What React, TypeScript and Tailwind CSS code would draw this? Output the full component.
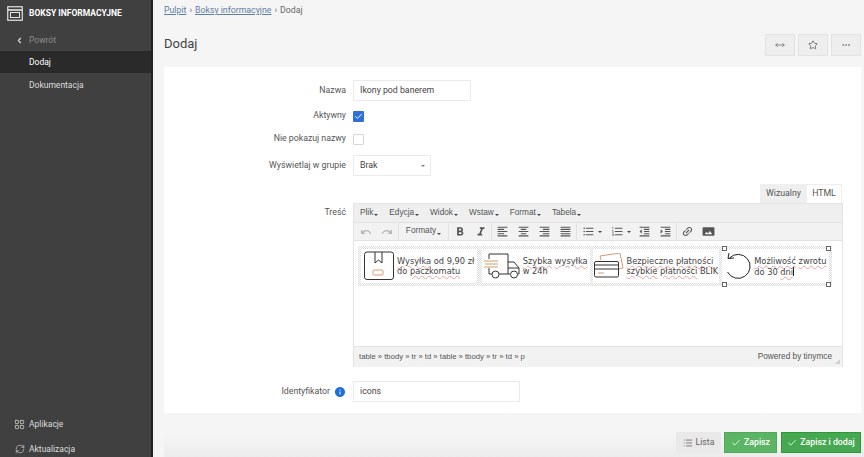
import { Check, ChevronLeft, Ellipsis, LayoutGrid, List, MoveHorizontal, RefreshCw, Star } from "lucide-react"
import {
  MdFormatAlignCenter,
  MdFormatAlignJustify,
  MdFormatAlignLeft,
  MdFormatAlignRight,
  MdFormatBold,
  MdFormatIndentDecrease,
  MdFormatIndentIncrease,
  MdFormatItalic,
  MdFormatListBulleted,
  MdFormatListNumbered,
  MdInfo,
  MdLink,
  MdPanorama,
  MdRedo,
  MdUndo,
} from "react-icons/md"
import type { ReactNode } from "react"

const menuItems = ["Plik", "Edycja", "Widok", "Wstaw", "Format", "Tabela"]

function Caret({ className = "" }: { className?: string }) {
  return <span className={`inline-block border-x-[2px] border-t-[2px] border-x-transparent border-t-[#444] ${className}`}></span>
}

function ToolBtn({ children, faded = false }: { children: ReactNode; faded?: boolean }) {
  return <span className={`flex h-[17px] w-[21px] items-center justify-center ${faded ? "text-[#b5b5b5]" : "text-[#555]"}`}>{children}</span>
}

function Divider() {
  return <span className="h-[17px] w-px bg-[#e2e2e2]"></span>
}

function Handle({ className }: { className: string }) {
  return <span className={`absolute h-[5px] w-[5px] border border-[#666] bg-white ${className}`}></span>
}

function Wavy({ children }: { children: ReactNode }) {
  return <span className="underline decoration-[#eba0a0] decoration-wavy decoration-[1px] underline-offset-1">{children}</span>
}

function PackageIcon() {
  return (
    <svg width="31" height="30" viewBox="0 0 31 30" fill="none" className="shrink-0">
      <rect x="0.5" y="1" width="29" height="27.5" rx="2.5" stroke="#333" />
      <path d="M11 1v11l3.5-3 3.5 3V1" stroke="#333" />
      <rect x="9" y="19" width="10" height="5" rx="1" stroke="#d79a70" />
    </svg>
  )
}

function TruckIcon() {
  return (
    <svg width="37" height="26" viewBox="0 0 37 26" fill="none" className="shrink-0">
      <path d="M5 1h19v20h-9M5 1v5M5 15v6h3" stroke="#333" />
      <path d="M24 9h6l5 6v6h-1M24 15h11M24 21h2" stroke="#333" />
      <circle cx="11.5" cy="21.5" r="3.5" stroke="#333" />
      <circle cx="30" cy="21.5" r="3.5" stroke="#333" />
      <path d="M0 8h14M1 11h13M0 14h14" stroke="#d79a70" />
    </svg>
  )
}

function CardIcon() {
  return (
    <svg width="31" height="26" viewBox="0 0 31 26" fill="none" className="shrink-0">
      <path d="M7 7 6 3l20-3 3 15-4 1" stroke="#d79a70" />
      <rect x="0.5" y="8.5" width="24" height="15.5" rx="1.5" stroke="#333" />
      <path d="M1 12h24M1 16h24" stroke="#333" />
      <path d="M4 20h6" stroke="#d79a70" />
    </svg>
  )
}

function ReturnIcon() {
  return (
    <svg width="25" height="27" viewBox="0 0 25 27" fill="none" className="shrink-0">
      <path d="M3.5 5A12 12 0 1 1 1.5 19" stroke="#222" />
      <path d="M2 5.5 8 5M2 5.5 3 0" stroke="#222" />
    </svg>
  )
}

function Row({ label, children, className = "" }: { label: ReactNode; children: ReactNode; className?: string }) {
  return (
    <div className={`flex items-center ${className}`}>
      <div className="flex w-[189px] shrink-0 items-center justify-end pr-[7px] text-[#555]">{label}</div>
      {children}
    </div>
  )
}

export default function App() {
  return (
    <div className="flex h-[457px] w-[864px] overflow-hidden bg-[#f5f5f5] font-['Roboto',sans-serif] text-[8.75px] text-[#444]">
      {/* Sidebar */}
      <aside className="flex w-[153px] shrink-0 flex-col border-r-2 border-[#222] bg-[#404040] text-[#ddd]">
        <div className="flex h-[29px] items-center gap-[6px] pb-[2px] pl-[7px]">
          <svg width="16" height="15" viewBox="0 0 16 15" fill="none">
            <rect x="0.75" y="0.75" width="14.5" height="13.5" stroke="#e5e5e5" strokeWidth="1.2" />
            <path d="M1 4h14" stroke="#e5e5e5" strokeWidth="1.6" />
            <rect x="3.5" y="6.5" width="9" height="5" stroke="#e5e5e5" />
          </svg>
          <span className="text-[8.5px] font-bold text-white">BOKSY INFORMACYJNE</span>
        </div>
        <div className="flex h-[22px] items-center text-[8.5px] text-[#8c8c8c]">
          <ChevronLeft size={9} strokeWidth={3} className="ml-[15px] mr-[5px] text-[#ddd]" />
          Powrót
        </div>
        <div className="flex h-[22px] items-center bg-[#2a2a2a] pl-[29px] text-[8.5px] text-white">Dodaj</div>
        <div className="flex h-[24px] items-center pl-[29px] text-[8.5px]">Dokumentacja</div>
        <div className="mt-auto flex h-[25px] items-center gap-[4px] pl-[14px] text-[8.5px]">
          <LayoutGrid size={11} strokeWidth={1.5} />
          Aplikacje
        </div>
        <div className="flex h-[20px] items-center gap-[4px] pl-[15px] pt-[4px] text-[8.5px]">
          <RefreshCw size={10} strokeWidth={1.5} />
          Aktualizacja
        </div>
      </aside>

      {/* Main */}
      <main className="flex min-w-0 flex-1 flex-col pl-[11px]">
        <div className="flex h-[20px] items-center gap-[3px] pt-[1px] text-[#666]">
          <a className="text-[#5f7ea6] underline">Pulpit</a>›<a className="text-[#5f7ea6] underline">Boksy informacyjne</a>›<span>Dodaj</span>
        </div>
        <div className="mt-[14px] flex h-[22px] items-center justify-between pr-[3px]">
          <h1 className="pb-[2px] text-[13px] text-[#444]">Dodaj</h1>
          <div className="flex gap-[3px]">
            <button className="flex h-[22px] w-[30px] items-center justify-center border border-[#e3e3e3] bg-[#eeeeee] text-[#777]">
              <MoveHorizontal size={10} />
            </button>
            <button className="flex h-[22px] w-[30px] items-center justify-center border border-[#e3e3e3] bg-[#eeeeee] text-[#666]">
              <Star size={10} />
            </button>
            <button className="flex h-[22px] w-[30px] items-center justify-center border border-[#e3e3e3] bg-[#eeeeee] text-[#777]">
              <Ellipsis size={10} />
            </button>
          </div>
        </div>

        {/* Form card */}
        <section className="mr-[3px] mt-[11px] h-[346px] bg-white pt-[13px]">
          <Row label="Nazwa">
            <div className="flex h-[21px] w-[118px] items-center border border-[#eaeaea] px-[6px] text-[#444]">Ikony pod banerem</div>
          </Row>
          <Row label="Aktywny" className="mt-[8px] h-[14px]">
            <span className="flex h-[11px] w-[11px] items-center justify-center rounded-[1px] bg-[#2f6fdc]">
              <Check size={9} strokeWidth={2.5} className="text-white" />
            </span>
          </Row>
          <Row label="Nie pokazuj nazwy" className="mt-[9px] h-[14px]">
            <span className="h-[11px] w-[11px] rounded-[1px] border border-[#d5d5d5] bg-white"></span>
          </Row>
          <Row label="Wyświetlaj w grupie" className="mt-[9px]">
            <div className="flex h-[21px] w-[78px] items-center justify-between border border-[#eaeaea] pl-[6px] pr-[5px] text-[#444]">
              Brak
              <Caret className="border-t-[#777]" />
            </div>
          </Row>

          <div className="mt-[8px] flex">
            <div className="w-[189px] shrink-0 pr-[7px] pt-[22px] text-right text-[#555]">Treść</div>
            <div className="w-[490px]">
              <div className="flex h-[19px] justify-end pr-[1px] text-[#555]">
                <span className="flex w-[47px] items-center justify-center bg-[#efefef]">Wizualny</span>
                <span className="flex w-[35px] items-center justify-center border-r border-t border-[#eee]">HTML</span>
              </div>
              <div className="relative h-[164px] border border-[#e4e4e4] font-['Liberation_Sans',sans-serif] text-[8.25px]">
                <div className="flex h-[18px] items-center gap-[11px] bg-[#efefef] pl-[6px]">
                  {menuItems.map((item) => (
                    <span key={item} className="flex items-center gap-[1px] text-[#555]">
                      {item}
                      <Caret className="mt-[4px]" />
                    </span>
                  ))}
                </div>
                <div className="flex h-[19px] items-center border-y border-[#e2e2e2] bg-[#f2f2f2] pl-[1px]">
                  <ToolBtn faded><MdUndo size={12} /></ToolBtn>
                  <ToolBtn faded><MdRedo size={12} /></ToolBtn>
                  <span className="ml-[1px]"></span>
                  <Divider />
                  <span className="flex w-[49px] items-center justify-center gap-[1px] text-[#555]">
                    Formaty
                    <Caret className="mt-[4px]" />
                  </span>
                  <Divider />
                  <ToolBtn><MdFormatBold size={14} /></ToolBtn>
                  <ToolBtn><MdFormatItalic size={14} /></ToolBtn>
                  <Divider />
                  <ToolBtn><MdFormatAlignLeft size={13} /></ToolBtn>
                  <ToolBtn><MdFormatAlignCenter size={13} /></ToolBtn>
                  <ToolBtn><MdFormatAlignRight size={13} /></ToolBtn>
                  <ToolBtn><MdFormatAlignJustify size={13} /></ToolBtn>
                  <Divider />
                  <span className="flex w-[30px] items-center justify-center gap-[3px] text-[#555]">
                    <MdFormatListBulleted size={13} />
                    <Caret />
                  </span>
                  <span className="flex w-[27px] items-center justify-center gap-[3px] text-[#555]">
                    <MdFormatListNumbered size={13} />
                    <Caret />
                  </span>
                  <ToolBtn><MdFormatIndentDecrease size={13} /></ToolBtn>
                  <ToolBtn><MdFormatIndentIncrease size={13} /></ToolBtn>
                  <Divider />
                  <ToolBtn><MdLink size={13} className="-rotate-45" /></ToolBtn>
                  <ToolBtn><MdPanorama size={13} /></ToolBtn>
                </div>

                {/* Editor content */}
                <div className="h-[105px] bg-white pl-[4px] pt-[5px] font-['DejaVu_Sans',sans-serif] text-[8.25px] leading-[10px] text-[#444]">
                  <div className="relative flex h-[40px] w-[474px] gap-[3px] bg-[repeating-conic-gradient(#dcdcdc_0_25%,#ffffff_0_50%)] bg-[length:2px_2px] p-[3px]">
                    <div className="flex w-[116px] items-center gap-[2px] bg-white pl-[3px]">
                      <PackageIcon />
                      <div className="whitespace-nowrap">
                        <Wavy>Wysyłka</Wavy> od 9,90 zł
                        <br />
                        do <Wavy>paczkomatu</Wavy>
                      </div>
                    </div>
                    <div className="ml-[2px] flex w-[108px] items-center gap-[2px] bg-white pl-[2px]">
                      <TruckIcon />
                      <div className="whitespace-nowrap">
                        <Wavy>Szybka</Wavy> <Wavy>wysyłka</Wavy>
                        <br />w 24h
                      </div>
                    </div>
                    <div className="flex w-[127px] items-center gap-[2px] bg-white pl-[1px]">
                      <CardIcon />
                      <div className="whitespace-nowrap">
                        <Wavy>Bezpieczne</Wavy> <Wavy>płatności</Wavy>
                        <br />
                        <Wavy>szybkie</Wavy> <Wavy>płatności</Wavy> BLIK
                      </div>
                    </div>
                    <div className="flex w-[107px] items-center gap-[3px] bg-white pl-[4px]">
                      <ReturnIcon />
                      <div className="whitespace-nowrap">
                        <Wavy>Możliwość</Wavy> <Wavy>zwrotu</Wavy>
                        <br />
                        do 30 <Wavy>dni</Wavy>
                        <span className="inline-block h-[9px] w-px translate-y-[1px] bg-[#222]"></span>
                      </div>
                    </div>
                    <Handle className="left-[364px] top-0" />
                    <Handle className="right-[1px] top-0" />
                    <Handle className="bottom-[-1px] left-[364px]" />
                    <Handle className="bottom-[-1px] right-[1px]" />
                  </div>
                </div>

                <div className="flex h-[21px] items-center justify-between border-t border-[#e2e2e2] bg-[#f2f2f2] pl-[5px] pr-[10px] text-[#555]">
                  <span className="text-[7.7px]">table » tbody » tr » td » table » tbody » tr » td » p</span>
                  <span>Powered by tinymce</span>
                </div>
                <svg width="7" height="7" viewBox="0 0 7 7" className="absolute bottom-[1px] right-[1px]">
                  <path d="M6 1v5H1z" fill="#cfcfcf" />
                </svg>
              </div>
            </div>
          </div>

          <Row
            className="mt-[14px]"
            label={
              <>
                Identyfikator
                <MdInfo size={12} className="ml-[4px] text-[#1f6fd6]" />
              </>
            }
          >
            <div className="flex h-[21px] w-[167px] items-center border border-[#eaeaea] px-[6px] text-[#444]">icons</div>
          </Row>
        </section>

        {/* Footer actions */}
        <div className="mt-auto flex h-[44px] items-end justify-end bg-gradient-to-b from-[#f5f5f5] via-[#f5f5f5] to-[#ececec] pb-[4px] pr-[3px]">
          <button className="flex h-[21px] w-[45px] items-center justify-center gap-[3px] bg-[#e9e9e9] text-[#666]">
            <List size={10} />
            Lista
          </button>
          <button className="ml-[3px] flex h-[21px] w-[53px] items-center justify-center gap-[3px] border border-[#4fa95a] bg-[#5cb565] font-medium text-white">
            <Check size={10} />
            Zapisz
          </button>
          <button className="ml-[4px] flex h-[21px] w-[80px] items-center justify-center gap-[3px] border border-[#2a9a38] bg-[#46a850] font-medium text-white">
            <Check size={10} />
            Zapisz i dodaj
          </button>
        </div>
      </main>
    </div>
  )
}
